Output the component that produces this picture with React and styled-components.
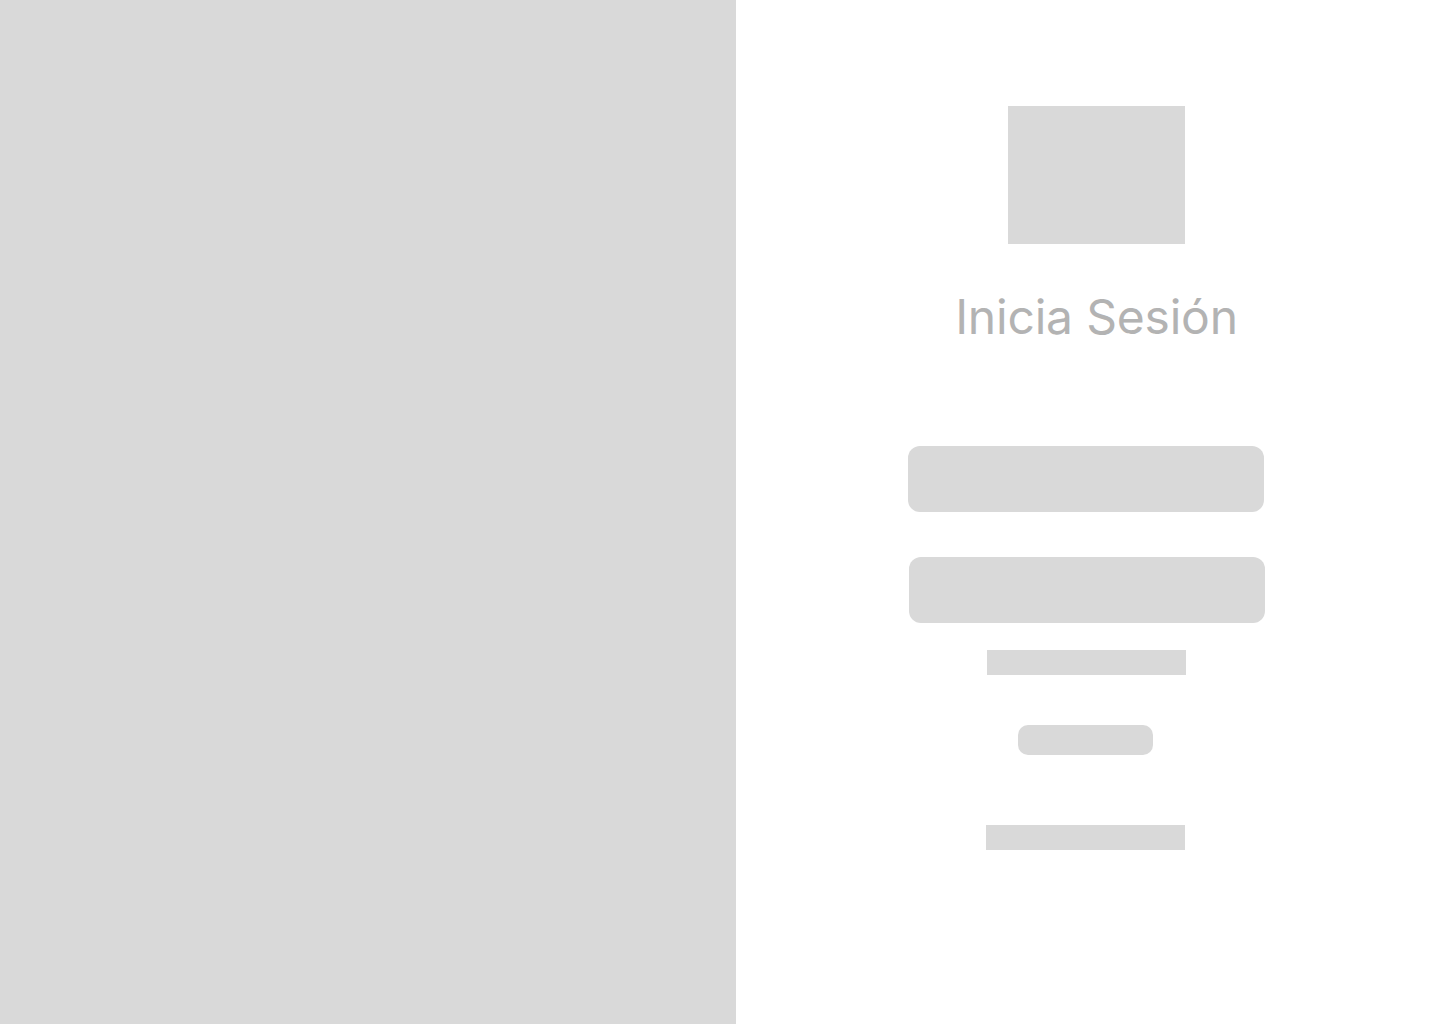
import React from "react";
import styled, { createGlobalStyle } from "styled-components";

const Global = createGlobalStyle`
  html, body { margin: 0; padding: 0; background: #ffffff; }
  body { font-family: Inter, "Noto Sans", sans-serif; }
  * { box-sizing: border-box; }
`;

const Page = styled.div`
  display: flex;
  width: 1440px;
  height: 1024px;
  overflow: hidden;
`;

const ImagePanel = styled.div`
  flex: 0 0 736px;
  height: 100%;
  background: #d9d9d9;
`;

const FormPanel = styled.div`
  flex: 1;
  display: flex;
  flex-direction: column;
  align-items: center;
  padding-top: 106px;
  background: #ffffff;
`;

const Logo = styled.div`
  width: 177px;
  height: 138px;
  background: #d9d9d9;
  margin-left: 17px;
`;

const Title = styled.h1`
  margin: 44px 0 0 17px;
  font-family: Inter, "Noto Sans", sans-serif;
  font-size: 48px;
  font-weight: 400;
  line-height: 58px;
  letter-spacing: -0.2px;
  color: #b3b3b3;
`;

const Input = styled.div`
  width: 356px;
  height: 66px;
  border-radius: 12px;
  background: #d9d9d9;
  margin-top: ${(p) => p.$top}px;
  margin-right: ${(p) => p.$shift}px;
`;

const TextBar = styled.div`
  width: 199px;
  height: 25px;
  background: #d9d9d9;
  margin-top: ${(p) => p.$top}px;
  margin-right: ${(p) => p.$shift}px;
`;

const Button = styled.div`
  width: 135px;
  height: 30px;
  border-radius: 10px;
  background: #d9d9d9;
  margin-top: 50px;
  margin-right: 5px;
`;

export default function App() {
  return (
    <>
      <Global />
      <Page>
        <ImagePanel />
        <FormPanel>
          <Logo />
          <Title>Inicia Sesión</Title>
          <Input $top={100} $shift={4} />
          <Input $top={45} $shift={2} />
          <TextBar $top={27} $shift={3} />
          <Button />
          <TextBar $top={70} $shift={5} />
        </FormPanel>
      </Page>
    </>
  );
}
